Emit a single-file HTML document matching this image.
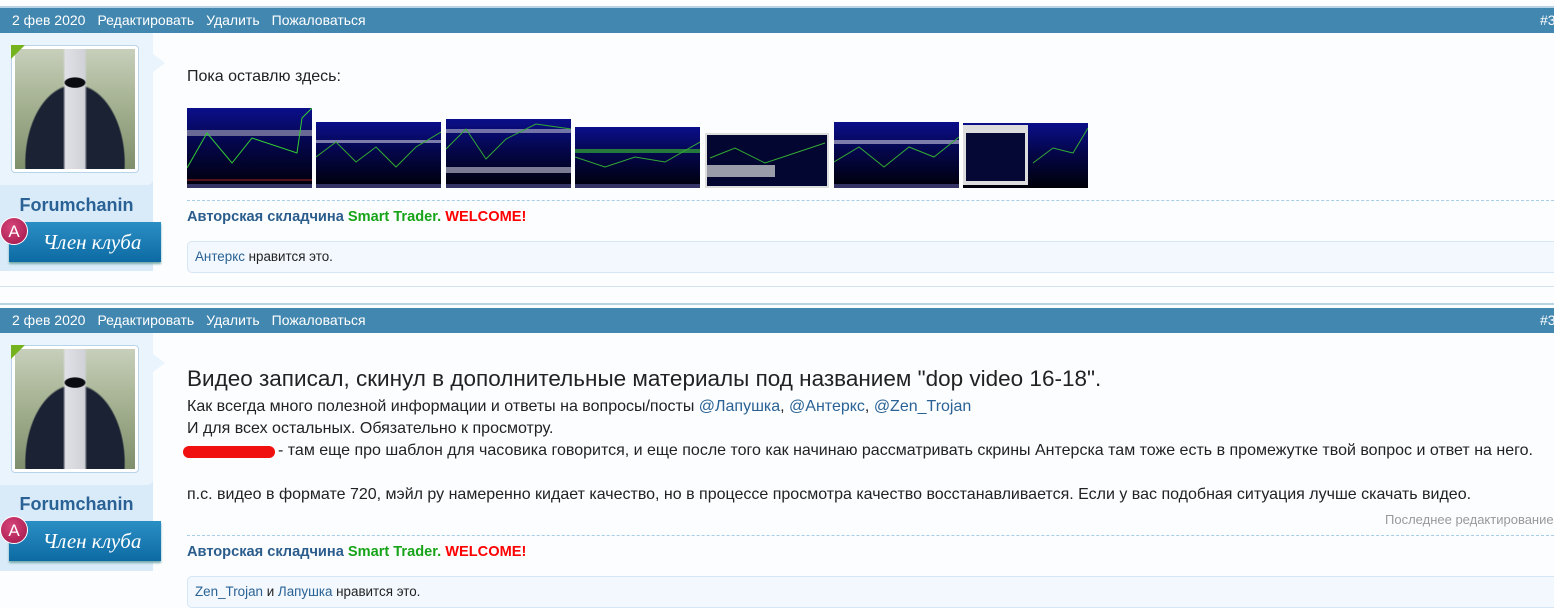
<!DOCTYPE html>
<html><head><meta charset="utf-8"><style>
*{margin:0;padding:0;box-sizing:border-box}
body{width:1554px;height:607px;overflow:hidden;background:#fcfdff;font-family:"Liberation Sans",Arial,sans-serif;position:relative}
.abs{position:absolute}
.bar{left:0;width:1554px;height:25px;background:#4187b0;color:#fff;font-size:14px;line-height:25px;padding-left:12px;white-space:nowrap}
.bar span{margin-right:12px}
.topline{left:0;width:1554px;height:2px;background:#b8d2e6}
.side{left:0;width:153px;background:#d9ebf9}
.sideup{left:0;width:153px;background:#eaf4fd;border-radius:0 0 6px 0}
.arrow{width:0;height:0;border-top:9px solid transparent;border-bottom:9px solid transparent;border-left:12px solid #eaf4fd}
.av{left:11px;width:128px;height:128px;border:1px solid #b9d3e8;border-radius:4px;background:#fff;padding:3px}
.av div{width:100%;height:100%;background:
radial-gradient(ellipse 16px 8px at 50% 28%,#0b0b12 60%,transparent 70%),
linear-gradient(90deg,transparent 40%,#e0e0e6 42%,#d0d2d8 58%,transparent 60%),
radial-gradient(ellipse 70px 110px at 50% 95%,#1a2233 70%,transparent 72%),
linear-gradient(180deg,#c7cfbb,#a9b596 40%,#7f8f6c);}
.corner{left:11px;width:0;height:0;border-top:14px solid #74b21e;border-right:14px solid transparent}
.name{left:0;width:153px;text-align:center;font-size:18px;font-weight:bold;color:#2a6295}
.badge{left:9px;width:152px;height:40px;background:linear-gradient(#2a8fc4,#0d6aa3);color:#fff;font-family:"Liberation Serif",serif;font-style:italic;font-size:21px;text-align:center;line-height:40px;padding-left:14px;box-shadow:0 2px 2px #7aa}
.circ{left:0;width:28px;height:28px;border-radius:50%;background:radial-gradient(circle at 40% 35%,#d6457a,#a11548);color:#fff;font-size:17px;text-align:center;line-height:28px;border:1px solid #fff}
.txt{left:187px;color:#222;font-size:16px;white-space:nowrap}
.dash{left:187px;width:1367px;border-top:1px dashed #a8cde6}
.sig{left:187px;font-size:14.6px;font-weight:bold;color:#2a5d8c}
.g{color:#18a418}.r{color:#f00}
.likes{left:187px;width:1380px;height:32px;border:1px solid #d6e6f4;border-radius:5px;background:#f2f8fd;font-size:13.4px;line-height:30px;padding-left:7px;color:#222}
a{color:#2a6295;text-decoration:none}
.img{background:linear-gradient(180deg,#0b0f8a,#04064a 45%,#000008);overflow:hidden}
.img svg{width:100%;height:100%}
</style></head><body>

<div class="abs topline" style="top:6px"></div>
<div class="abs bar" style="top:8px"><span>2 фев 2020</span><span>Редактировать</span><span>Удалить</span><span>Пожаловаться</span><span style="position:absolute;left:1540px">#3</span></div>
<div class="abs side" style="top:33px;height:238px"></div>
<div class="abs sideup" style="top:33px;height:152px"></div>
<div class="abs arrow" style="left:153px;top:54px"></div>
<div class="abs av" style="top:45px"><div></div></div>
<div class="abs corner" style="top:45px"></div>
<div class="abs name" style="top:195px">Forumchanin</div>
<div class="abs badge" style="top:222px">Член клуба</div>
<div class="abs circ" style="top:217px">A</div>

<div class="abs txt" style="top:68px">Пока оставлю здесь:</div>
<div class="abs dash" style="top:200px"></div>
<div class="abs sig" style="top:209px">Авторская складчина <span class="g">Smart Trader.</span> <span class="r">WELCOME!</span></div>
<div class="abs likes" style="top:241px"><a>Антеркс</a> нравится это.</div>

<div class="abs" style="left:0;top:286px;width:1554px;height:1px;background:#d5e3ee"></div>

<div class="abs topline" style="top:303px"></div>
<div class="abs bar" style="top:308px"><span>2 фев 2020</span><span>Редактировать</span><span>Удалить</span><span>Пожаловаться</span><span style="position:absolute;left:1540px">#3</span></div>
<div class="abs side" style="top:333px;height:238px"></div>
<div class="abs sideup" style="top:333px;height:152px"></div>
<div class="abs arrow" style="left:153px;top:354px"></div>
<div class="abs av" style="top:345px"><div></div></div>
<div class="abs corner" style="top:345px"></div>
<div class="abs name" style="top:494px">Forumchanin</div>
<div class="abs badge" style="top:521px">Член клуба</div>
<div class="abs circ" style="top:516px">A</div>

<div class="abs txt" style="top:366px;font-size:22.5px">Видео записал, скинул в дополнительные материалы под названием "dop video 16-18".</div>
<div class="abs txt" style="top:398px">Как всегда много полезной информации и ответы на вопросы/посты <a>@Лапушка</a>, <a>@Антеркс</a>, <a>@Zen_Trojan</a></div>
<div class="abs txt" style="top:420px">И для всех остальных. Обязательно к просмотру.</div>
<div class="abs" style="left:183px;top:446px;width:92px;height:12px;background:#f01010;border-radius:6px"></div>
<div class="abs txt" style="top:442px;left:278px">- там еще про шаблон для часовика говорится, и еще после того как начинаю рассматривать скрины Антерска там тоже есть в промежутке твой вопрос и ответ на него.</div>
<div class="abs txt" style="top:486px">п.с. видео в формате 720, мэйл ру намеренно кидает качество, но в процессе просмотра качество восстанавливается. Если у вас подобная ситуация лучше скачать видео.</div>
<div class="abs" style="left:1385px;top:512px;font-size:13px;color:#999;white-space:nowrap">Последнее редактирование</div>
<div class="abs dash" style="top:535px"></div>
<div class="abs sig" style="top:544px">Авторская складчина <span class="g">Smart Trader.</span> <span class="r">WELCOME!</span></div>
<div class="abs likes" style="top:576px"><a>Zen_Trojan</a> и <a>Лапушка</a> нравится это.</div>

<div class="abs img" style="left:187px;top:108px;width:125px;height:80px"><svg viewBox="0 0 125 80"><rect y="22" width="125" height="6" fill="#aab" opacity=".6"/><polyline points="0,60 20,25 45,55 65,30 110,45 115,10 125,0" fill="none" stroke="#3c3" stroke-width="1"/><line x1="0" y1="72" x2="125" y2="72" stroke="#a22"/><rect y="76" width="125" height="4" fill="#336"/></svg></div>
<div class="abs img" style="left:316px;top:122px;width:125px;height:66px"><svg viewBox="0 0 125 66"><rect y="18" width="125" height="3" fill="#ccd" opacity=".6"/><polyline points="0,35 20,20 40,40 60,25 80,45 100,25 125,10" fill="none" stroke="#3a3"/><rect y="62" width="125" height="4" fill="#336"/></svg></div>
<div class="abs img" style="left:446px;top:119px;width:125px;height:69px"><svg viewBox="0 0 125 69"><rect y="10" width="125" height="4" fill="#bbc" opacity=".6"/><rect y="48" width="125" height="6" fill="#ccd" opacity=".6"/><polyline points="0,30 20,10 40,40 60,20 90,5 125,10" fill="none" stroke="#3a3"/><rect y="65" width="125" height="4" fill="#336"/></svg></div>
<div class="abs img" style="left:575px;top:127px;width:125px;height:61px"><svg viewBox="0 0 125 61"><rect y="22" width="125" height="4" fill="#3a3" opacity=".7"/><polyline points="0,30 30,40 60,30 90,35 125,15" fill="none" stroke="#3a3"/><rect y="57" width="125" height="4" fill="#336"/></svg></div>
<div class="abs img" style="left:705px;top:133px;width:124px;height:55px;background:#ddd"><svg viewBox="0 0 124 55"><rect x="2" y="2" width="120" height="51" fill="#030630"/><rect x="0" y="32" width="70" height="12" fill="#ddd" opacity=".7"/><polyline points="5,25 30,15 60,30 90,20 120,10" fill="none" stroke="#3a3"/></svg></div>
<div class="abs img" style="left:834px;top:122px;width:125px;height:66px"><svg viewBox="0 0 125 66"><rect y="18" width="125" height="4" fill="#ccd" opacity=".6"/><polyline points="0,40 25,25 50,45 75,25 100,35 125,15" fill="none" stroke="#3a3"/><rect y="62" width="125" height="4" fill="#336"/></svg></div>
<div class="abs img" style="left:963px;top:123px;width:125px;height:65px"><svg viewBox="0 0 125 65"><rect x="0" y="2" width="65" height="60" fill="#ddd"/><rect x="3" y="10" width="59" height="48" fill="#050835"/><polyline points="70,40 90,25 110,30 125,5" fill="none" stroke="#3a3"/></svg></div>
</body></html>
